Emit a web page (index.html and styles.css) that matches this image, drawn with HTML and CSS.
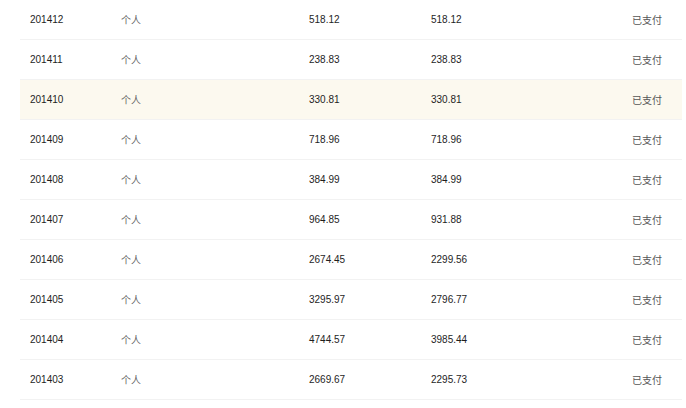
FILE: index.html
```html
<!DOCTYPE html>
<html lang="zh-CN">
<head>
<meta charset="utf-8">
<title>账单</title>
<link rel="stylesheet" href="styles.css">
</head>
<body>
<div class="table">
  <div class="row"><span class="c-month">201412</span><span class="c-type">个人</span><span class="c-num">518.12</span><span class="c-num">518.12</span><span class="c-status">已支付</span></div>
  <div class="row"><span class="c-month">201411</span><span class="c-type">个人</span><span class="c-num">238.83</span><span class="c-num">238.83</span><span class="c-status">已支付</span></div>
  <div class="row row-hover"><span class="c-month">201410</span><span class="c-type">个人</span><span class="c-num">330.81</span><span class="c-num">330.81</span><span class="c-status">已支付</span></div>
  <div class="row"><span class="c-month">201409</span><span class="c-type">个人</span><span class="c-num">718.96</span><span class="c-num">718.96</span><span class="c-status">已支付</span></div>
  <div class="row"><span class="c-month">201408</span><span class="c-type">个人</span><span class="c-num">384.99</span><span class="c-num">384.99</span><span class="c-status">已支付</span></div>
  <div class="row"><span class="c-month">201407</span><span class="c-type">个人</span><span class="c-num">964.85</span><span class="c-num">931.88</span><span class="c-status">已支付</span></div>
  <div class="row"><span class="c-month">201406</span><span class="c-type">个人</span><span class="c-num">2674.45</span><span class="c-num">2299.56</span><span class="c-status">已支付</span></div>
  <div class="row"><span class="c-month">201405</span><span class="c-type">个人</span><span class="c-num">3295.97</span><span class="c-num">2796.77</span><span class="c-status">已支付</span></div>
  <div class="row"><span class="c-month">201404</span><span class="c-type">个人</span><span class="c-num">4744.57</span><span class="c-num">3985.44</span><span class="c-status">已支付</span></div>
  <div class="row"><span class="c-month">201403</span><span class="c-type">个人</span><span class="c-num">2669.67</span><span class="c-num">2295.73</span><span class="c-status">已支付</span></div>
</div>
</body>
</html>
```
FILE: styles.css
```css
html, body {
  margin: 0;
  padding: 0;
  background: #ffffff;
}
body {
  font-family: "Liberation Sans", Arial, "Noto Sans CJK SC", sans-serif;
  font-size: 10px;
  color: #222222;
}
.table {
  margin-left: 20px;
  width: 662px;
}
.row {
  display: grid;
  grid-template-columns: 91px 188px 122px 1fr auto;
  align-items: center;
  height: 39px;
  padding: 0 20px 0 10px;
  border-bottom: 1px solid #f2f2f2;
}
.row-hover {
  background: #fcf9ef;
}
.c-month,
.c-num {
  font-family: "Liberation Sans", Arial, sans-serif;
  color: #1e1e1e;
  line-height: 12px;
}
.c-type {
  font-family: "Noto Sans CJK SC", sans-serif;
  color: #666666;
  line-height: 12px;
}
.c-status {
  font-family: "Noto Sans CJK SC", sans-serif;
  color: #555555;
  line-height: 12px;
}
```
